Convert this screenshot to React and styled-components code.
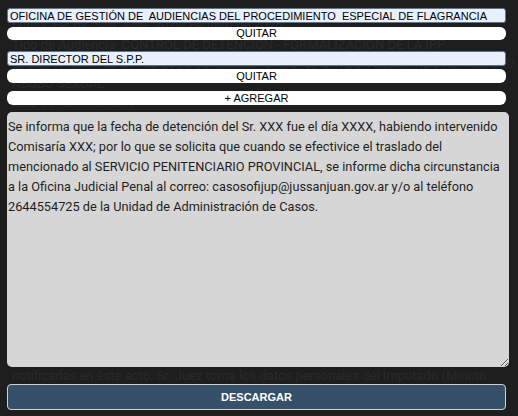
import React from "react";
import styled, { createGlobalStyle } from "styled-components";

const GlobalStyle = createGlobalStyle`
  html, body {
    margin: 0;
    padding: 0;
    background: #1e1e1e;
  }
  * { box-sizing: border-box; }
`;

const destinatarios = [
  "OFICINA DE GESTIÓN DE  AUDIENCIAS DEL PROCEDIMIENTO  ESPECIAL DE FLAGRANCIA",
  "SR. DIRECTOR DEL S.P.P.",
];

const mensaje =
  "Se informa que la fecha de detención del Sr. XXX fue el día XXXX, habiendo intervenido Comisaría XXX; por lo que se solicita que cuando se efectivice el traslado del mencionado al SERVICIO PENITENCIARIO PROVINCIAL, se informe dicha circunstancia a la Oficina Judicial Penal al correo: casosofijup@jussanjuan.gov.ar y/o al teléfono 2644554725 de la Unidad de Administración de Casos.";

const lineasActa = [
  "Lunes, Fecha: San Juan, 20 de Febrero de 2025",
  "Tipo de Audiencia: CONTROL DE DETENCIÓN - FORMALIZACIÓN DE LA IPP",
  "Legajo Nº MPF-SJ-01702-2025 Caratulado: C. L.C. C/ ORTEGA LEONARDO ALFREDO S/",
  "ABUSO SEXUAL",
  "Sala de Audiencias: 9",
  "Juez: Dr. XXXXXXXX XXXXXXX",
  "Fiscal: Dr. XXXXXXX XXXXX",
  "Defensor: Dr. XXXXXXX XXXXXXX",
  "Imputado: ORTEGA LEONARDO ALFREDO",
  "Hora de inicio: 09:15 hs.",
  "Hora de finalización: 09:45 hs.",
  "Siendo la hora indicada se da inicio a la audiencia de",
  "control de detención y formalización de la investigación",
  "penal preparatoria, con la presencia de las partes",
  "mencionadas. Se identifican las partes presentes, las",
  "cuales manifiestan sus datos y se tienen por",
  "acreditadas. Se informa a las partes que la audiencia",
  "se graba en soporte digital, quedando las partes",
  "notificadas en éste acto. Sr. Juez toma los datos personales del Imputado (Minuto",
  "00:01:10). Se concede la palabra a la Fiscalía, siguiendo el orden legal, a fs. 6",
];

const Page = styled.div`
  position: relative;
  width: 518px;
  height: 416px;
  overflow: hidden;
  background: #1e1e1e;
`;

const Acta = styled.div`
  padding: 15px 0 0 12px;
  font-family: Roboto, "Noto Sans", sans-serif;
  font-size: 13px;
  line-height: 19.5px;
  color: #2a2a2a;
  white-space: nowrap;
`;

const Linea = styled.div``;

const Overlay = styled.div`
  position: absolute;
  inset: 0;
  padding: 8px 7px 0 7px;
  display: flex;
  flex-direction: column;
  align-items: flex-start;
`;

const Grupo = styled.div`
  width: 499px;
  display: flex;
  flex-direction: column;
  gap: ${(p) => p.$gap}px;
  margin-bottom: ${(p) => p.$mb}px;
`;

const Campo = styled.input`
  width: 100%;
  height: 15px;
  margin: 0;
  padding: 0 2px;
  border: 1px solid #5d7792;
  border-radius: 3px;
  background: #e8f0fe;
  color: #000;
  font-family: "Liberation Sans", Arial, sans-serif;
  font-size: 11px;
  outline: none;
`;

const Boton = styled.button`
  width: 499px;
  height: ${(p) => p.$h}px;
  margin: 0 0 ${(p) => p.$mb || 0}px 0;
  padding: 0;
  border: none;
  border-radius: 6px;
  background: #fff;
  color: #000;
  font-family: "Liberation Sans", Arial, sans-serif;
  font-size: 11px;
  line-height: 1;
  cursor: pointer;
`;

const Mensaje = styled.textarea`
  width: 502px;
  height: 255px;
  margin: 0 0 17px 0;
  padding: 5px 1px 2px 1px;
  border: none;
  border-radius: 5px;
  background: #d6d6d6;
  color: #1f1f1f;
  font-family: Roboto, "Noto Sans", sans-serif;
  font-size: 12.75px;
  line-height: 20px;
  outline: none;
`;

const Descargar = styled.button`
  width: 499px;
  height: 26px;
  margin: 0;
  padding: 0;
  border: 1px solid #d0d0d0;
  border-radius: 4px;
  background: #36506a;
  color: #fff;
  font-family: "Liberation Sans", Arial, sans-serif;
  font-size: 11px;
  font-weight: bold;
  cursor: pointer;
`;

export default function App() {
  return (
    <Page>
      <GlobalStyle />
      <Acta>
        {lineasActa.map((l, i) => (
          <Linea key={i}>{l}</Linea>
        ))}
      </Acta>
      <Overlay>
        <Grupo $gap={4} $mb={11}>
          <Campo defaultValue={destinatarios[0]} />
          <Boton $h={13}>QUITAR</Boton>
        </Grupo>
        <Grupo $gap={3} $mb={8}>
          <Campo defaultValue={destinatarios[1]} />
          <Boton $h={14}>QUITAR</Boton>
        </Grupo>
        <Boton $h={14} $mb={7}>+ AGREGAR</Boton>
        <Mensaje defaultValue={mensaje} />
        <Descargar>DESCARGAR</Descargar>
      </Overlay>
    </Page>
  );
}
